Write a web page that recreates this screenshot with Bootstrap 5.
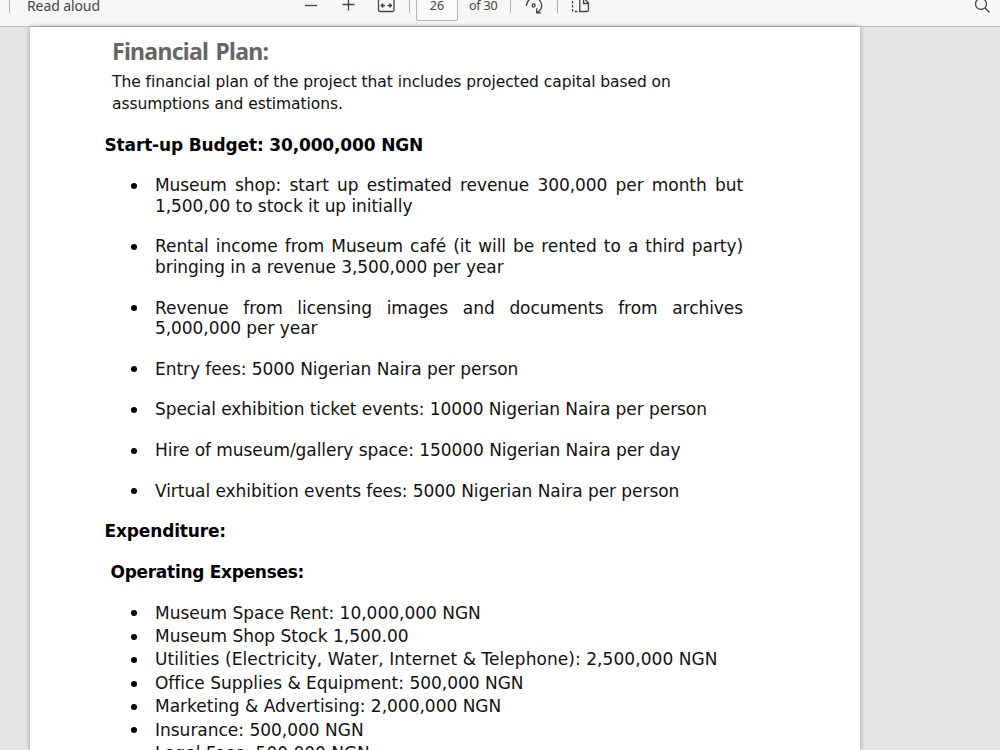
<!DOCTYPE html>
<html lang="en">
<head>
    <meta charset="UTF-8">
    <meta name="viewport" content="width=device-width, initial-scale=1.0">
    <title>Financial Plan</title>

    <!-- Bootstrap CSS -->
    <link href="https://cdn.jsdelivr.net/npm/bootstrap@5.3.0/dist/css/bootstrap.min.css" rel="stylesheet">

    <style>
        body {
            background-color: #e5e5e5;
            height: 100vh;
            overflow: hidden;
        }

        .viewer-bar {
            height: 27px;
            background-color: #f7f7f7;
            border-bottom: 1px solid #bdbdbd;
            font: 14px "Noto Sans", sans-serif;
            color: #444;
        }

        /* the bar is scrolled partly out of view */
        .viewer-tools {
            height: 42px;
            margin-top: -16px;
            padding: 0 9px 0 9px;
        }

        .viewer-tools svg {
            width: 20px;
            height: 20px;
            fill: none;
            stroke: #444;
            stroke-width: 1.3;
            flex: none;
        }

        .divider {
            width: 1px;
            height: 16px;
            background-color: #b5b5b5;
        }

        .read-aloud {
            width: 274px;
            margin-left: 17px;
            letter-spacing: -0.1px;
        }

        .zoom-tools {
            gap: 17.5px;
            margin-right: 13px;
        }

        .page-input {
            width: 42px;
            height: 32px;
            margin: 0 11px 0 6px;
            padding: 0;
            border: 1px solid #b5b5b5;
            border-radius: 2px;
            background-color: #fafafa;
            font-size: 12.5px;
            color: #444;
            text-align: center;
        }

        .page-total {
            width: 41px;
            font-size: 12.5px;
            letter-spacing: -0.2px;
        }

        .rotate-icon {
            margin: 0 13px;
        }

        .view-icon {
            margin-left: 12px;
        }

        .sheet {
            width: 830px;
            height: 723px;
            margin-left: 30px;
            padding: 11px 117px 0 74.5px;
            box-shadow: 0 0 5px rgba(0, 0, 0, 0.35);
            font: 17px/20.35px "DejaVu Sans", Verdana, sans-serif;
            letter-spacing: -0.06px;
            color: #111;
        }

        .sheet h1 {
            margin: 0 0 8px 7.5px;
            font: bold 23px/26px "Noto Sans", sans-serif;
            letter-spacing: -0.7px;
            word-spacing: 2px;
            color: #666;
        }

        .intro {
            width: 580px;
            margin: 0 0 19.4px 7.5px;
            font-size: 15.5px;
            line-height: 21.7px;
            letter-spacing: -0.06px;
        }

        .sheet h2 {
            margin: 0 0 20.3px;
            font-size: 17px;
            font-weight: bold;
            line-height: 20.35px;
            letter-spacing: -0.15px;
            color: #000;
        }

        .sheet h2.indented {
            margin: 0 0 19.3px 6px;
            letter-spacing: -0.29px;
        }

        .sheet li {
            display: flex;
            text-align: justify;
        }

        .sheet li::before {
            content: "";
            flex: none;
            width: 6px;
            height: 6px;
            margin: 7.6px 18.5px 0 26px;
            border-radius: 50%;
            background-color: #000;
        }

        .income li {
            margin-bottom: 20.35px;
        }

        .costs {
            line-height: 23.4px;
            letter-spacing: -0.01px;
        }

        .costs li::before {
            margin-top: 8.9px;
        }

        .costs .wide-line {
            letter-spacing: 0.06px;
        }
    </style>
</head>
<body>

<nav class="viewer-bar overflow-hidden">
    <div class="viewer-tools d-flex align-items-center">
        <span class="divider"></span>
        <span class="read-aloud">Read aloud</span>
        <div class="zoom-tools d-flex">
            <svg viewBox="0 0 20 20"><path d="M4 10.500h12"/></svg>
            <svg viewBox="0 0 20 20"><path d="M3.500 9.500h12M9.500 3.500v12"/></svg>
            <svg viewBox="0 0 20 20"><rect x="2.500" y="3.500" width="15.500" height="13" rx="1.500"/><path d="M9 10.500H5M7.200 8.500l-2 2 2 2M11.500 10.500h4M13.500 8.500l2 2-2 2"/></svg>
        </div>
        <span class="divider"></span>
        <input type="text" class="page-input" value="26" aria-label="Page">
        <span class="page-total">of 30</span>
        <span class="divider"></span>
        <svg class="rotate-icon" viewBox="0 0 20 20"><path d="M2.300 10.800C3 6 6 3.200 10 3.200c4.500 0 7.700 3.200 7.700 7.300 0 3-1.700 5.500-4.700 7M12.700 13.200v4.600h4.300"/><circle cx="9.700" cy="10.500" r="1.500"/></svg>
        <span class="divider"></span>
        <svg class="view-icon" viewBox="0 0 20 20"><path d="M9 3.500H4q-1.500 0-1.500 1.500v10q0 1.500 1.500 1.500h5" stroke-dasharray="2.500 1.500"/><path d="M9.800 3.500h4.200l4.500 4.500v7q0 1.500-1.500 1.500H9.800zM13.500 3.500v5h5"/></svg>
        <svg class="ms-auto" viewBox="0 0 20 20"><circle cx="10" cy="9" r="5.500"/><path d="M14 13l4.500 4.500"/></svg>
    </div>
</nav>

<main class="sheet bg-white">
    <h1>Financial Plan:</h1>
    <p class="intro">The financial plan of the project that includes projected capital based on assumptions and estimations.</p>

    <h2>Start-up Budget: 30,000,000 NGN</h2>
    <ul class="income list-unstyled mb-0">
        <li><span>Museum shop: start up estimated revenue 300,000 per month but 1,500,00 to stock it up initially</span></li>
        <li><span>Rental income from Museum café (it will be rented to a third party) bringing in a revenue 3,500,000 per year</span></li>
        <li><span>Revenue from licensing images and documents from archives 5,000,000 per year</span></li>
        <li><span>Entry fees: 5000 Nigerian Naira per person</span></li>
        <li><span>Special exhibition ticket events: 10000 Nigerian Naira per person</span></li>
        <li><span>Hire of museum/gallery space: 150000 Nigerian Naira per day</span></li>
        <li><span>Virtual exhibition events fees: 5000 Nigerian Naira per person</span></li>
    </ul>

    <h2>Expenditure:</h2>
    <h2 class="indented">Operating Expenses:</h2>
    <ul class="costs list-unstyled">
        <li><span>Museum Space Rent: 10,000,000 NGN</span></li>
        <li><span>Museum Shop Stock 1,500.00</span></li>
        <li class="wide-line"><span>Utilities (Electricity, Water, Internet &amp; Telephone): 2,500,000 NGN</span></li>
        <li><span>Office Supplies &amp; Equipment: 500,000 NGN</span></li>
        <li><span>Marketing &amp; Advertising: 2,000,000 NGN</span></li>
        <li><span>Insurance: 500,000 NGN</span></li>
        <li><span>Legal Fees: 500,000 NGN</span></li>
    </ul>
</main>

<!-- Bootstrap JS -->
<script src="https://cdn.jsdelivr.net/npm/bootstrap@5.3.0/dist/js/bootstrap.bundle.min.js"></script>
</body>
</html>
